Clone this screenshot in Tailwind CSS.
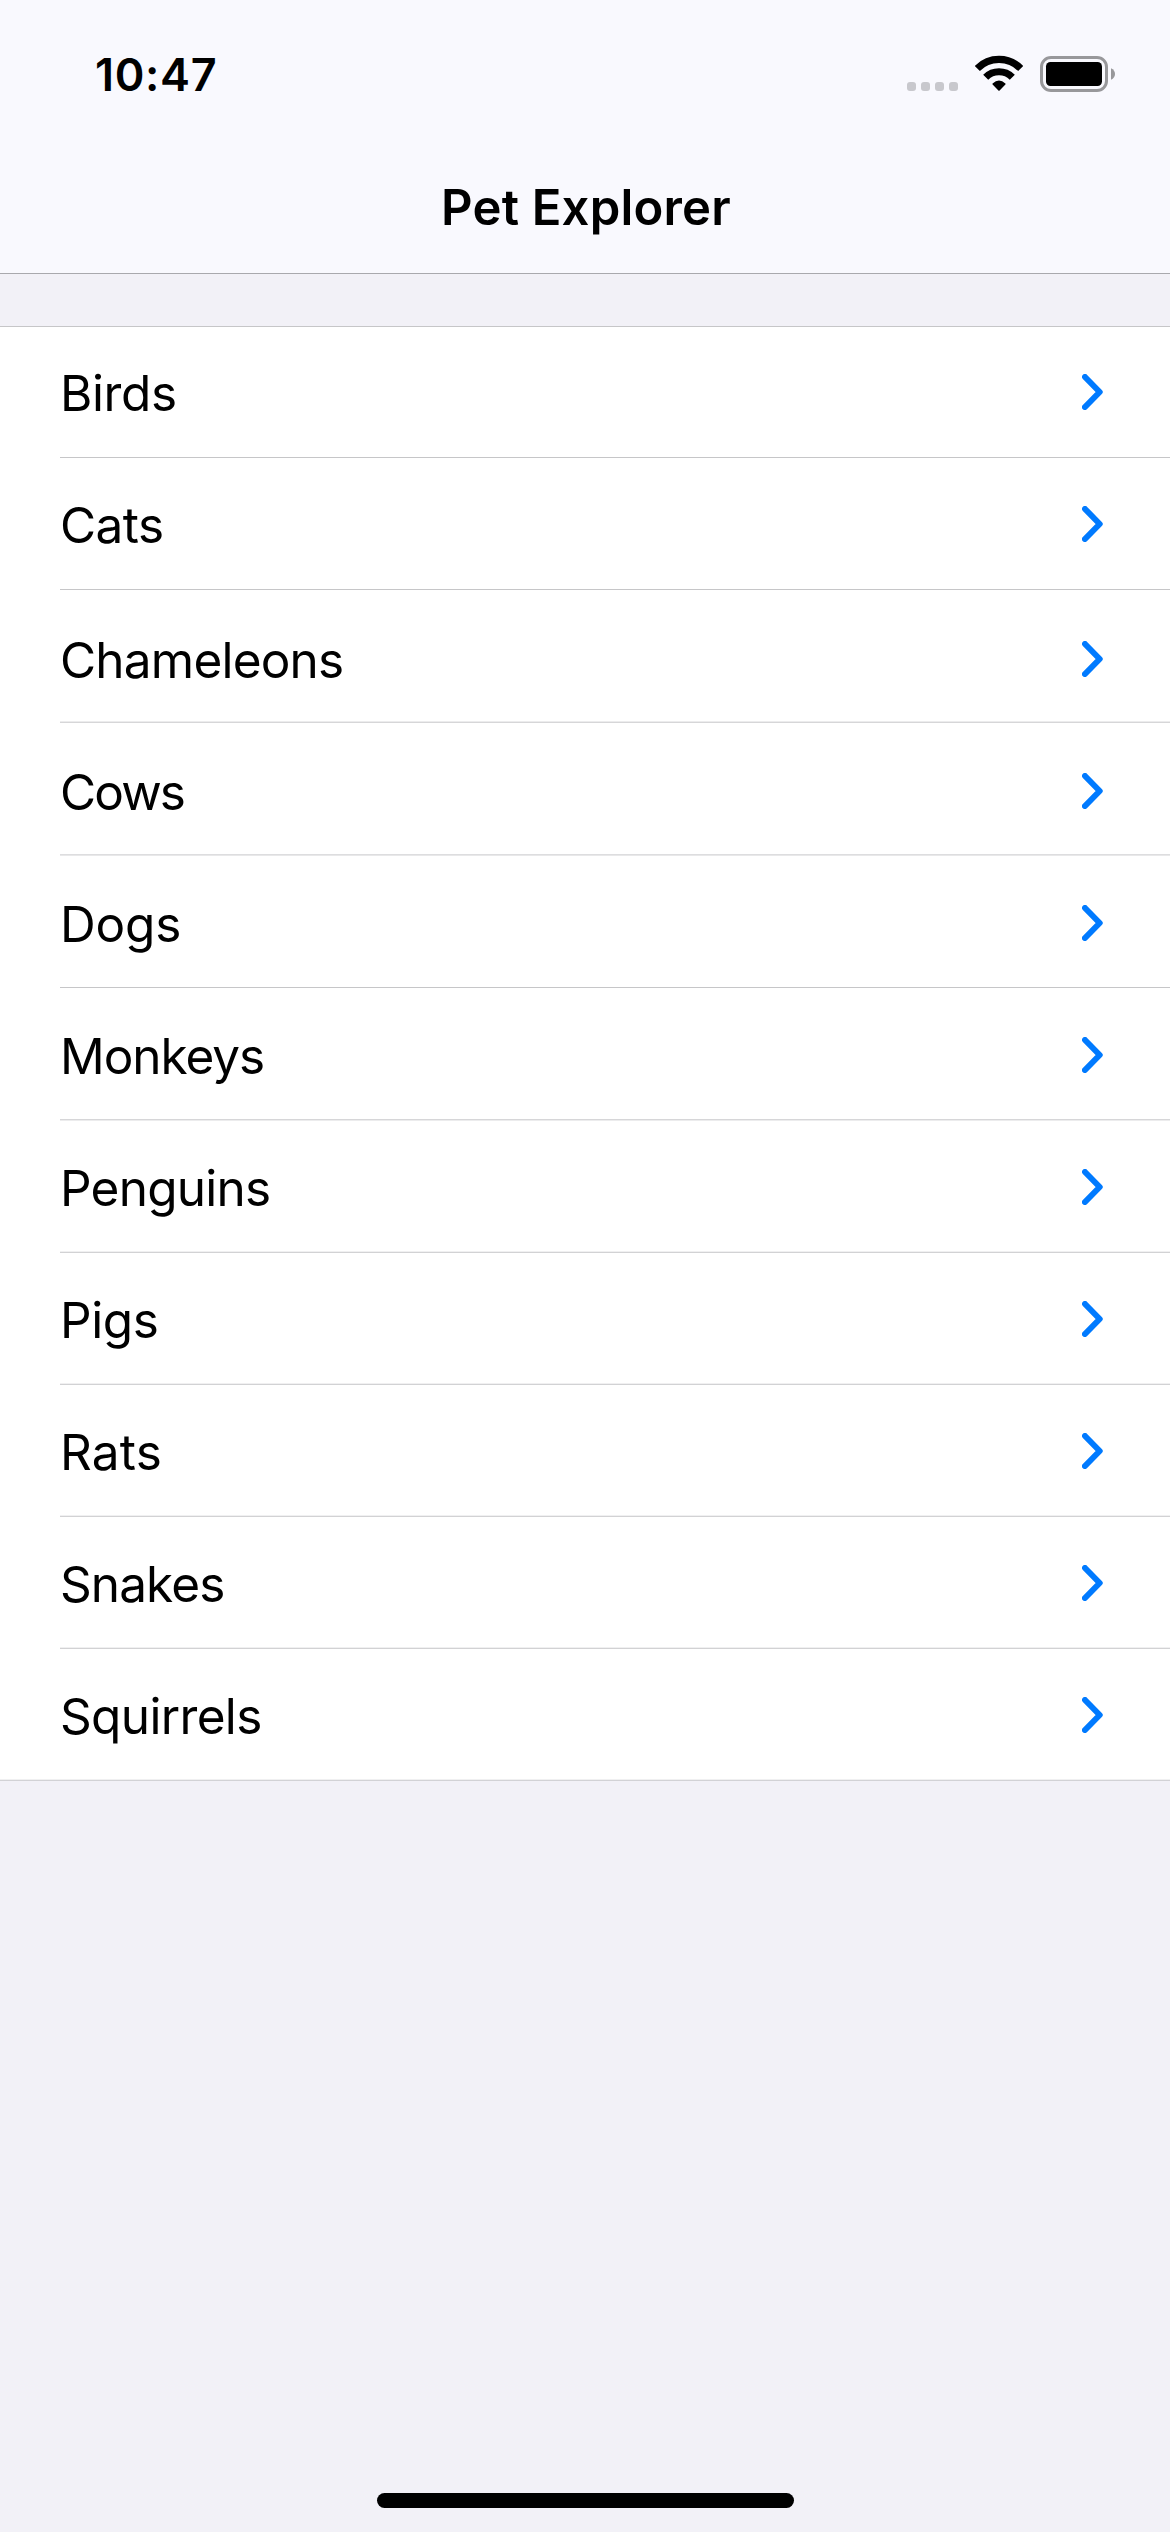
<!DOCTYPE html>
<html lang="en">
<head>
<meta charset="utf-8">
<title>Pet Explorer</title>
<script src="https://cdn.jsdelivr.net/npm/@tailwindcss/browser@4"></script>
</head>
<body class="bg-[#f2f1f7]">
<svg class="hidden"><symbol id="chevron" viewBox="0 0 21 36"><path d="M3 3L17.7 18L3 33" fill="none" stroke="#007aff" stroke-width="6" stroke-linecap="round" stroke-linejoin="round"/></symbol></svg>
<div class="flex h-[2532px] w-[1170px] flex-col overflow-hidden font-['Inter',sans-serif] text-black">
  <header class="flex h-[274px] shrink-0 flex-col border-b border-[#a9a9ad] bg-[#f9f9fe]">
    <div class="flex h-[178px] shrink-0 items-start justify-between pt-[47px] pr-[55px] pl-[95px]">
      <span class="text-[45px] leading-[55px] font-semibold tracking-[0.65px]">10:47</span>
      <div class="flex items-start pt-2">
        <div class="mt-[27px] flex gap-[5px]">
          <span class="size-[9px] rounded-[3px] bg-[#c8c8cd]"></span>
          <span class="size-[9px] rounded-[3px] bg-[#c8c8cd]"></span>
          <span class="size-[9px] rounded-[3px] bg-[#c8c8cd]"></span>
          <span class="size-[9px] rounded-[3px] bg-[#c8c8cd]"></span>
        </div>
        <svg class="ml-[17px] h-9 w-12" viewBox="0 0 48 36">
          <g fill="none" stroke="#000" stroke-width="7.2">
            <path d="M2.3 13.5A30.5 30.5 0 0 1 45.7 13.5"/>
            <path d="M10.7 22.2A19 19 0 0 1 37.3 22.2"/>
          </g>
          <path d="M17.6 28.6Q24 22.4 30.4 28.6Q30.9 29.1 30.4 29.6L24.6 35.4Q24 36 23.4 35.4L17.6 29.6Q17.1 29.1 17.6 28.6Z"/>
        </svg>
        <svg class="mt-px ml-[17px] h-9 w-[75px]" viewBox="0 0 75 36">
          <rect x="1.5" y="1.5" width="65" height="33" rx="9.5" fill="none" stroke="#98989b" stroke-width="3"/>
          <rect x="6" y="6" width="56" height="24" rx="4.5"/>
          <path d="M71 12.3Q75 14.2 75 18Q75 21.8 71 23.7Z" fill="#98989b"/>
        </svg>
      </div>
    </div>
    <h1 class="pl-0.5 text-center text-[49px] leading-[59px] font-semibold tracking-[0.2px]">Pet Explorer</h1>
  </header>
  <main class="mt-[52px] border-t border-[#c6c6c8] bg-white text-[49.5px] leading-[60px]">
    <div class="ml-[60px] flex h-[131px] justify-between border-b border-[#c6c6c8] pt-9 pr-[67px]"><span class="tracking-[-0.4px]">Birds</span><svg class="mt-[11px] h-9 w-[21px]"><use href="#chevron"/></svg></div>
    <div class="ml-[60px] flex h-[132px] justify-between border-b border-[#c6c6c8] pt-[37px] pr-[67px]"><span class="tracking-[-0.55px]">Cats</span><svg class="mt-[11px] h-9 w-[21px]"><use href="#chevron"/></svg></div>
    <div class="ml-[60px] flex h-[133px] justify-between border-b border-[#d6d6d8] pt-[40px] pr-[67px] shadow-[inset_0_-1px_0_#ececed]"><span class="tracking-[-0.8px]">Chameleons</span><svg class="mt-[11px] h-9 w-[21px]"><use href="#chevron"/></svg></div>
    <div class="ml-[60px] flex h-[133px] justify-between border-b border-[#e8e8e9] pt-[39px] pr-[67px] shadow-[inset_0_-1px_0_#dddddf]"><span class="tracking-[-1.9px]">Cows</span><svg class="mt-[11px] h-9 w-[21px]"><use href="#chevron"/></svg></div>
    <div class="ml-[60px] flex h-[132px] justify-between border-b border-[#c6c6c8] pt-[38px] pr-[67px]"><span class="tracking-[-0.2px]">Dogs</span><svg class="mt-[11px] h-9 w-[21px]"><use href="#chevron"/></svg></div>
    <div class="ml-[60px] flex h-[133px] justify-between border-b border-[#ececed] pt-[38px] pr-[67px] shadow-[inset_0_-1px_0_#d6d6d8]"><span class="tracking-[-1.05px]">Monkeys</span><svg class="mt-[11px] h-9 w-[21px]"><use href="#chevron"/></svg></div>
    <div class="ml-[60px] flex h-[132px] justify-between border-b border-[#d2d2d4] pt-[37px] pr-[67px] shadow-[inset_0_-1px_0_#f0f0f1]"><span class="tracking-[-0.75px]">Penguins</span><svg class="mt-[11px] h-9 w-[21px]"><use href="#chevron"/></svg></div>
    <div class="ml-[60px] flex h-[132px] justify-between border-b border-[#d2d2d4] pt-[37px] pr-[67px] shadow-[inset_0_-1px_0_#f0f0f1]"><span class="tracking-[-0.4px]">Pigs</span><svg class="mt-[11px] h-9 w-[21px]"><use href="#chevron"/></svg></div>
    <div class="ml-[60px] flex h-[132px] justify-between border-b border-[#d2d2d4] pt-[37px] pr-[67px] shadow-[inset_0_-1px_0_#f0f0f1]"><span class="tracking-[0.2px]">Rats</span><svg class="mt-[11px] h-9 w-[21px]"><use href="#chevron"/></svg></div>
    <div class="ml-[60px] flex h-[132px] justify-between border-b border-[#d2d2d4] pt-[37px] pr-[67px] shadow-[inset_0_-1px_0_#f0f0f1]"><span class="tracking-[-0.9px]">Snakes</span><svg class="mt-[11px] h-9 w-[21px]"><use href="#chevron"/></svg></div>
    <div class="flex h-[132px] justify-between border-b border-[#d2d2d5] pt-[37px] pr-[67px] pl-[60px] shadow-[inset_0_-1px_0_#f0f0f1]"><span class="tracking-[-0.65px]">Squirrels</span><svg class="mt-[11px] h-9 w-[21px]"><use href="#chevron"/></svg></div>
  </main>
  <div class="mt-auto mb-6 ml-[377px] h-[15px] w-[417px] shrink-0 rounded-full bg-black"></div>
</div>
</body>
</html>
